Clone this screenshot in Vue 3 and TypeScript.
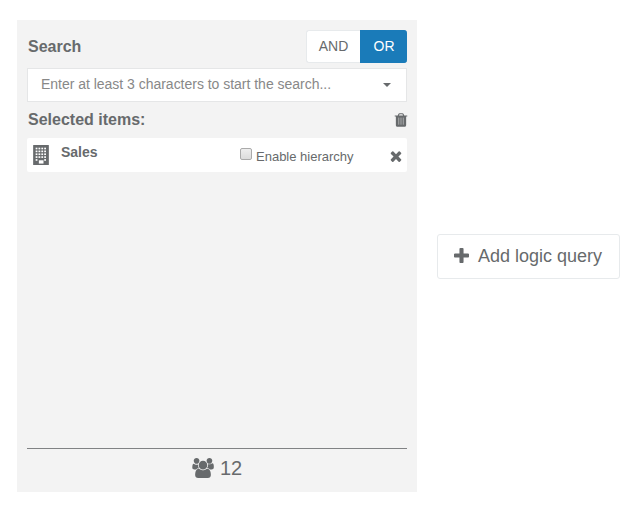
<script setup lang="ts">
import { ref } from 'vue'

type Operator = 'AND' | 'OR'

const operators: Operator[] = ['AND', 'OR']
const operator = ref<Operator>('OR')
const hierarchy = ref(false)
const items = ref<string[]>(['Sales'])
const memberCount = 12

const windowRows = [256, 512, 768, 1024]
const windowCols = [256, 512, 768, 1024]

function removeItem(name: string) {
  items.value = items.value.filter((item) => item !== name)
}
</script>

<template>
  <main class="page">
    <section class="panel">
      <header class="head">
        <h2 class="title">Search</h2>
        <div class="toggle">
          <button
            v-for="op in operators"
            :key="op"
            type="button"
            class="op"
            :class="{ active: op === operator }"
            @click="operator = op"
          >{{ op }}</button>
        </div>
      </header>

      <div class="select">
        <span>Enter at least 3 characters to start the search...</span>
        <i class="caret"></i>
      </div>

      <div class="selected-head">
        <h2 class="title">Selected items:</h2>
        <svg class="trash" viewBox="0 0 1792 1792" @click="items = []">
          <rect class="slots" x="500" y="620" width="800" height="800" />
          <path d="M704 1376v-704q0-14-9-23t-23-9h-64q-14 0-23 9t-9 23v704q0 14 9 23t23 9h64q14 0 23-9t9-23zm256 0v-704q0-14-9-23t-23-9h-64q-14 0-23 9t-9 23v704q0 14 9 23t23 9h64q14 0 23-9t9-23zm256 0v-704q0-14-9-23t-23-9h-64q-14 0-23 9t-9 23v704q0 14 9 23t23 9h64q14 0 23-9t9-23zm-544-992h448l-48-117q-7-9-17-11h-317q-10 2-17 11zm928 32v64q0 14-9 23t-23 9h-96v948q0 83-47 143.5t-113 60.5h-832q-66 0-113-58.5t-47-141.5v-952h-96q-14 0-23-9t-9-23v-64q0-14 9-23t23-9h309l70-167q15-37 54-63t79-26h320q40 0 79 26t54 63l70 167h309q14 0 23 9t9 23z" />
        </svg>
      </div>

      <div v-for="item in items" :key="item" class="item">
        <svg class="building" viewBox="0 0 1408 1792">
          <rect width="1408" height="1792" rx="32" />
          <g class="hole">
            <template v-for="y in windowRows" :key="y">
              <rect v-for="x in windowCols" :key="x" :x="x - 32" :y="y - 16" width="160" height="150" />
            </template>
            <rect x="224" y="1264" width="160" height="150" />
            <rect x="992" y="1264" width="160" height="150" />
            <rect x="512" y="1370" width="416" height="294" />
          </g>
        </svg>
        <strong class="name">{{ item }}</strong>
        <label class="check">
          <input v-model="hierarchy" type="checkbox" />
          <span>Enable hierarchy</span>
        </label>
        <svg class="remove" viewBox="0 0 1792 1792" @click="removeItem(item)">
          <path d="M1490 1322q0 40-28 68l-136 136q-28 28-68 28t-68-28l-294-294-294 294q-28 28-68 28t-68-28l-136-136q-28-28-28-68t28-68l294-294-294-294q-28-28-28-68t28-68l136-136q28-28 68-28t68 28l294 294 294-294q28-28 68-28t68 28l136 136q28 28 28 68t-28 68l-294 294 294 294q28 28 28 68z" />
        </svg>
      </div>

      <footer class="foot">
        <svg class="users" viewBox="0 0 1920 1792">
          <path d="M593 896q-162 5-265 128h-134q-82 0-138-40.5t-56-118.5q0-353 124-353 6 0 43.5 21t97.5 42.5 119 21.5q67 0 133-23-5 37-5 66 0 159 93 293zm1071 637q0 120-73 189.5t-194 69.5h-874q-121 0-194-69.5t-73-189.5q0-53 3.5-103.5t14-109 26.5-108.5 43-97.5 62-81 85.5-53.5 111.5-20q10 0 43 21.5t73 48 107 48 135 21.5 135-21.5 107-48 73-48 43-21.5q61 0 111.5 20t85.5 53.5 62 81 43 97.5 26.5 108.5 14 109 3.5 103.5zm-1024-1277q0 106-75 181t-181 75-181-75-75-181 75-181 181-75 181 75 75 181zm704 384q0 159-112.5 271.5t-271.5 112.5-271.5-112.5-112.5-271.5 112.5-271.5 271.5-112.5 271.5 112.5 112.5 271.5zm576 225q0 78-56 118.5t-138 40.5h-134q-103-123-265-128 93-134 93-293 0-29-5-66 66 23 133 23 59 0 119-21.5t97.5-42.5 43.5-21q124 0 124 353zm-128-609q0 106-75 181t-181 75-181-75-75-181 75-181 181-75 181 75 75 181z" />
        </svg>
        <span class="count">{{ memberCount }}</span>
      </footer>
    </section>

    <button type="button" class="add">
      <svg class="plus" viewBox="192 128 1408 1408">
        <path d="M1600 736v192q0 40-28 68t-68 28h-416v416q0 40-28 68t-68 28h-192q-40 0-68-28t-28-68v-416h-416q-40 0-68-28t-28-68v-192q0-40 28-68t68-28h416v-416q0-40 28-68t68-28h192q40 0 68 28t28 68v416h416q40 0 68 28t28 68z" />
      </svg>
      <span class="add-label">Add logic query</span>
    </button>
  </main>
</template>

<style>
body {
  background: #fff;
}
</style>

<style scoped>
.page {
  box-sizing: border-box;
  width: 643px;
  height: 513px;
  padding: 20px 0 0 17px;
  display: flex;
  align-items: flex-start;
  gap: 20px;
  font-family: "Liberation Sans", Arial, sans-serif;
  font-size: 14px;
  color: #676a6c;
}
.page * {
  box-sizing: border-box;
}
svg {
  display: block;
  flex: none;
  fill: #676a6c;
}
button {
  font-family: inherit;
  color: inherit;
  cursor: pointer;
}
.panel {
  width: 400px;
  height: 472px;
  padding: 10px;
  background: #f3f3f3;
  display: flex;
  flex-direction: column;
}
.head {
  height: 33px;
  display: flex;
  align-items: center;
  justify-content: space-between;
}
.title {
  margin: 0 0 0 1px;
  font-size: 16px;
  line-height: 20px;
  font-weight: 700;
}
.toggle {
  display: flex;
}
.op {
  height: 33px;
  padding: 0 0 1px;
  width: 54px;
  border: 1px solid #e7eaec;
  border-right: 0;
  border-radius: 3px 0 0 3px;
  background: #fff;
  font-size: 14px;
}
.op + .op {
  width: 47px;
  border-radius: 0 3px 3px 0;
}
.op.active {
  background: #1a7bb9;
  border-color: #1a7bb9;
  color: #fff;
}
.select {
  height: 34px;
  margin-top: 5px;
  padding: 0 15px 2px 13px;
  border: 1px solid #e5e6e7;
  background: #fff;
  color: #888;
  letter-spacing: -0.02px;
  display: flex;
  align-items: center;
  justify-content: space-between;
}
.caret {
  margin-top: 2px;
  border: 4px solid transparent;
  border-top-color: #676a6c;
  border-bottom: 0;
}
.selected-head {
  height: 36px;
  padding: 0 0 1px;
  display: flex;
  align-items: center;
  justify-content: space-between;
}
.trash {
  width: 16px;
  height: 16px;
  margin-right: -2px;
}
.slots {
  fill: #a3a5a6;
}
.item {
  height: 34px;
  padding: 0 4px 0 6px;
  background: #fff;
  border-radius: 2px;
  display: flex;
  align-items: center;
}
.building {
  width: 16px;
  height: 20px;
}
.hole {
  fill: #fff;
}
.name {
  margin: -7px 0 0 12px;
  width: 179px;
}
.check {
  display: flex;
  align-items: center;
  gap: 4px;
  font-size: 13px;
  padding-top: 3px;
}
.check input {
  appearance: none;
  width: 12px;
  height: 12px;
  margin: -5px 0 0;
  border: 1px solid #aaa;
  border-radius: 2px;
  background: linear-gradient(#eee, #dcdcdc);
}
.remove {
  width: 16px;
  height: 16px;
  margin: 1px -0.5px 0 auto;
}
.foot {
  height: 34px;
  margin-top: auto;
  border-top: 1px solid #808284;
  padding-top: 4px;
  display: flex;
  align-items: center;
  justify-content: center;
  gap: 6px;
  font-size: 20px;
}
.count {
  padding-top: 2px;
}
.users {
  width: 22px;
  height: 20px;
}
.add {
  width: 183px;
  height: 45px;
  margin-top: 214px;
  padding: 0 16px 2px;
  border: 1px solid #e7eaec;
  border-radius: 3px;
  background: #fff;
  display: flex;
  align-items: center;
  gap: 9px;
  font-size: 18px;
  white-space: nowrap;
}
.add-label {
  padding-top: 2px;
}
.plus {
  width: 15px;
  height: 15px;
}
</style>
